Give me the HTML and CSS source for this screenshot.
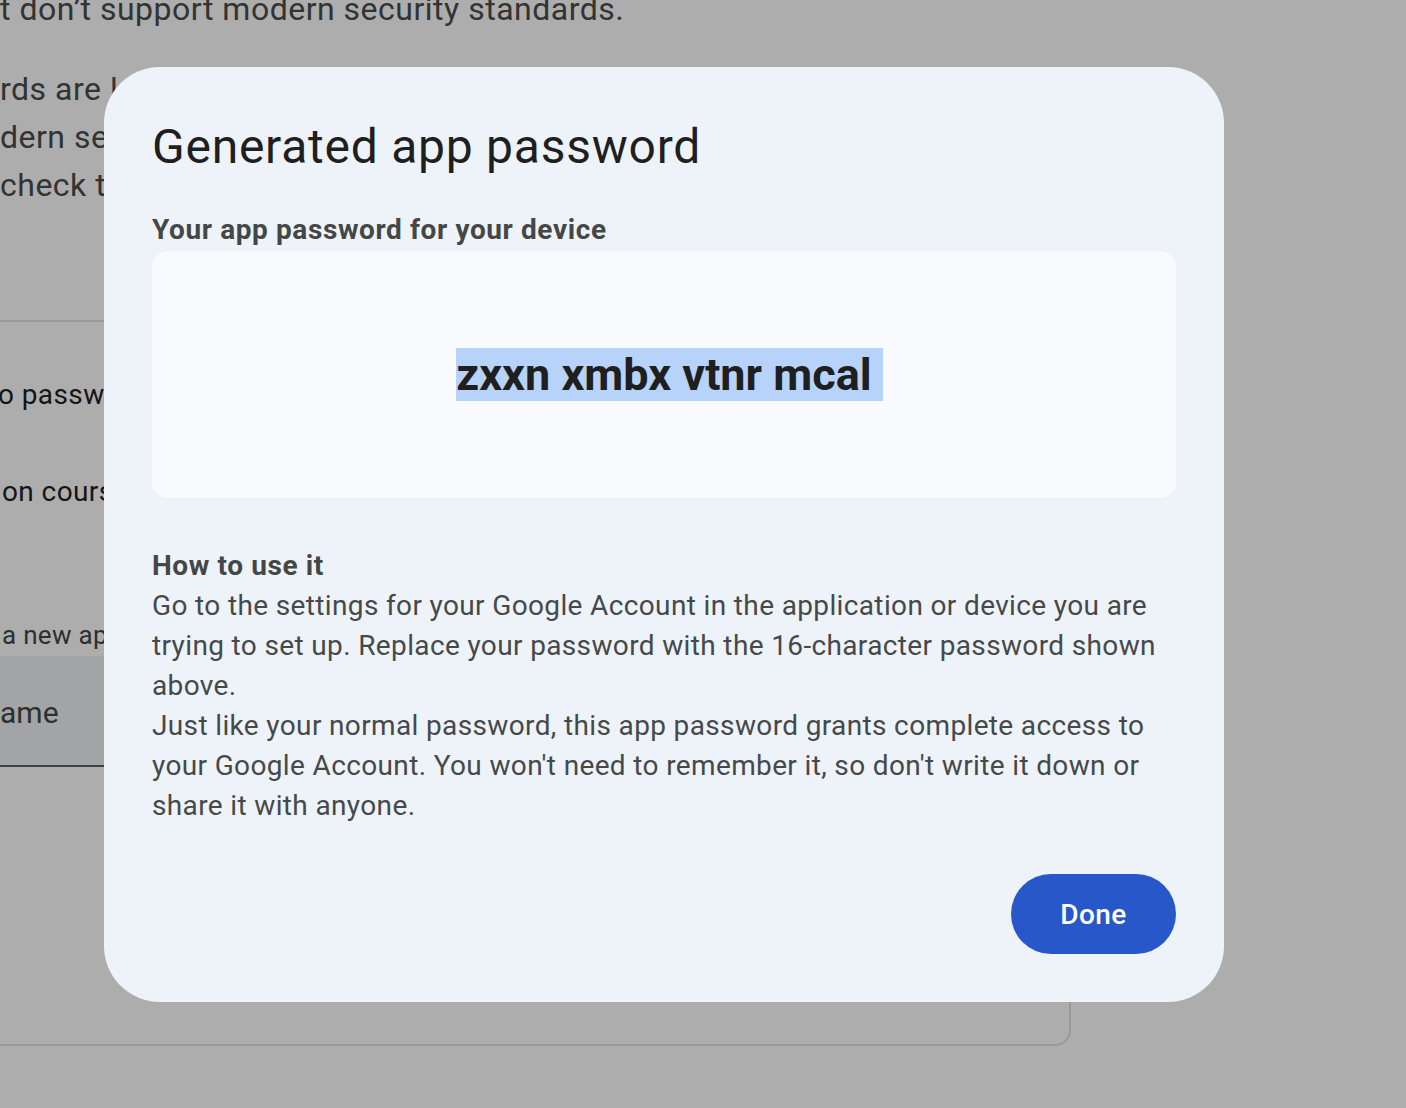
FILE: index.html
```html
<!DOCTYPE html>
<html lang="en">
<head>
<meta charset="utf-8">
<title>Generated app password</title>
<link rel="stylesheet" href="styles.css">
</head>
<body>
<div class="page">
  <p class="intro first">t don’t support modern security standards.</p>
  <p class="intro">rds are less secure than using up-to-date apps and services that use<br>dern security standards. Before you create an app password, you should<br>check to see if your app needs this in order to sign in.</p>
  <section class="card">
    <div class="card-title">o passwords</div>
    <div class="card-item">on course</div>
    <p class="card-note">a new app specific password, type a name for it below</p>
    <div class="field"><span class="field-text">ame</span></div>
  </section>
</div>
<div class="scrim"></div>
<div class="dialog" role="dialog" aria-labelledby="dlg-title">
  <h1 class="dialog-title" id="dlg-title">Generated app password</h1>
  <div class="label">Your app password for your device</div>
  <div class="pw-box">
    <span class="pw"><span class="sel">zxxn xmbx vtnr mcal</span></span>
  </div>
  <div class="howto">
    <div class="label">How to use it</div>
    <p class="body-text">Go to the settings for your Google Account in the application or device you are trying to set up. Replace your password with the 16-character password shown above.</p>
    <p class="body-text">Just like your normal password, this app password grants complete access to your Google Account. You won't need to remember it, so don't write it down or share it with anyone.</p>
  </div>
  <div class="actions">
    <button class="done" type="button">Done</button>
  </div>
</div>
</body>
</html>
```

FILE: styles.css
```css
html, body {
  margin: 0;
  padding: 0;
  background: #ffffff;
  overflow: hidden;
  height: 100%;
}

body {
  font-family: Roboto, "Liberation Sans", sans-serif;
}

.page {
  width: 1071px;
  overflow: hidden;
  height: 1108px;
}

.intro {
  margin: 32px 0 0;
  font-size: 32px;
  line-height: 48px;
  letter-spacing: 0.5px;
  color: #4a4c4b;
  white-space: nowrap;
}

.intro.first {
  margin-top: -15px;
}

.card {
  margin: 111px 0 0 -20px;
  height: 726px;
  box-sizing: border-box;
  border: 2px solid #e1e3e1;
  border-radius: 16px;
  padding: 53px 0 0 20px;
}

.card-title,
.card-item {
  font-size: 28px;
  line-height: 40px;
  letter-spacing: 0.4px;
  color: #1f1f1f;
  white-space: nowrap;
}

.card-title {
  margin-left: -4px;
}

.card-item {
  margin-top: 57px;
}

.card-note {
  margin: 103px 0 0 0;
  font-size: 26px;
  line-height: 40px;
  letter-spacing: 0.3px;
  color: #444746;
  white-space: nowrap;
}

.field {
  margin-top: 1px;
  margin-left: -20px;
  padding: 37px 0 0 18px;
  height: 111px;
  width: 600px;
  box-sizing: border-box;
  background: #f0f2f5;
  border-bottom: 2px solid #5f6368;
}

.field-text {
  font-size: 30px;
  line-height: 40px;
  color: #444746;
}

.scrim {
  position: fixed;
  inset: 0;
  background: rgba(0, 0, 0, 0.32);
}

.dialog {
  position: fixed;
  left: 104px;
  top: 67px;
  width: 1120px;
  box-sizing: border-box;
  padding: 48px;
  border-radius: 56px;
  background: #eef3fa;
}

.dialog-title {
  margin: 0 0 31px;
  font-size: 48px;
  line-height: 64px;
  font-weight: 400;
  letter-spacing: 0.75px;
  color: #1f1f1f;
}

.label {
  font-size: 28px;
  line-height: 40px;
  font-weight: 700;
  letter-spacing: 0.6px;
  color: #444746;
}

.pw-box {
  margin-top: 1px;
  height: 247px;
  border-radius: 16px;
  background: #f8fafd;
  display: flex;
  align-items: center;
  justify-content: center;
}

.pw {
  font-size: 45px;
  line-height: 56px;
  font-weight: 700;
  color: #1f1f1f;
}

.pw .sel {
  background: #b7d3f9;
  padding-right: 11px;
  margin-right: -11px;
}

.howto {
  margin-top: 48px;
}

.body-text {
  margin: 0;
  font-size: 28px;
  line-height: 40px;
  letter-spacing: 0.36px;
  color: #46494a;
}

.actions {
  display: flex;
  justify-content: flex-end;
  margin-top: 48px;
}

.done {
  width: 165px;
  height: 80px;
  border: none;
  border-radius: 40px;
  background: #2857c9;
  color: #ffffff;
  font-family: Roboto, "Liberation Sans", sans-serif;
  font-size: 28px;
  font-weight: 500;
  letter-spacing: 0.4px;
  padding: 0;
}
```
